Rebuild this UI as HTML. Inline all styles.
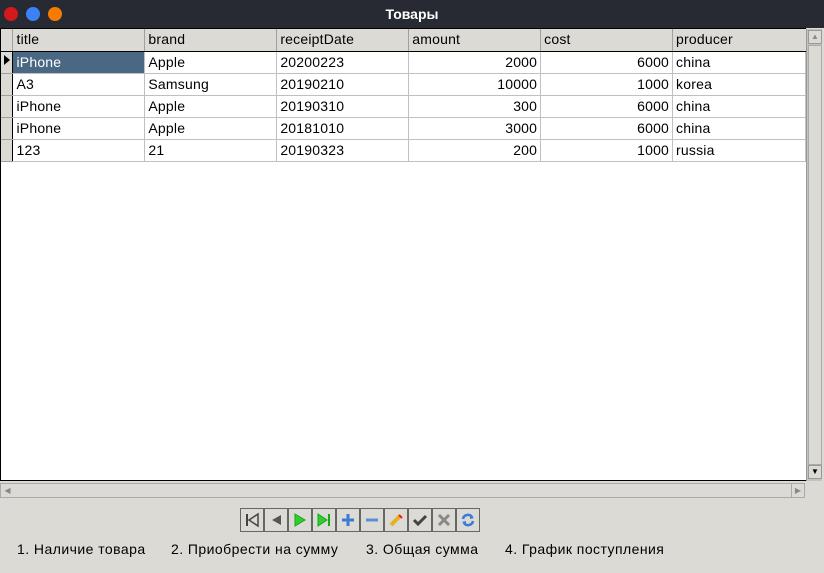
<!DOCTYPE html>
<html><head><meta charset="utf-8"><style>
*{box-sizing:border-box;margin:0;padding:0}
body{width:824px;height:573px;background:#dcdad5;font-family:"Liberation Sans","DejaVu Sans",sans-serif;font-size:14px;color:#000;position:relative;overflow:hidden}
.tb{position:absolute;left:0;top:0;width:824px;height:28px;background:#272a33;color:#fff;font-weight:bold;font-size:14px;text-align:center;line-height:28px}
.dot{position:absolute;top:7px;width:14px;height:14px;border-radius:50%}
.grid{position:absolute;left:0;top:28px;width:806px;height:453px;background:#fff;border:1px solid #000;border-right:none}
table{border-collapse:collapse;position:absolute;left:0;top:0;table-layout:fixed}
td,th{height:22px;padding:0 3px;border-right:1px solid #c0c0c0;border-bottom:1px solid #c0c0c0;font-weight:normal;text-align:left;white-space:nowrap;overflow:hidden;line-height:21px;letter-spacing:0.2px}
th{background:#dcdad5;border-right:1px solid #a0a0a0;border-bottom:1px solid #000}
td.rh{background:#dcdad5;border-right:1px solid #000;border-bottom:1px solid #a0a0a0;padding:0}
.r{text-align:right}
.sel{background:#4a6884;color:#fff}
.vs{position:absolute;left:806px;top:29px;width:16px;height:452px;background:#c4c2bd;border-left:1px solid #999}
.hs{position:absolute;left:0;top:483px;width:805px;height:15px;background:#dcdad5;border:1px solid #aaa}
.tbar{position:absolute;left:240px;top:508px;display:flex}
.tbar div{width:24px;height:24px;border:1px solid #666;background:#dcdad5;display:flex;align-items:center;justify-content:center}
.lbl{position:absolute;top:541px;font-size:14px;letter-spacing:0.45px}
</style></head><body>
<div class="tb">Товары
<div class="dot" style="left:4px;background:#d4191b"></div>
<div class="dot" style="left:26px;background:#3b82f6"></div>
<div class="dot" style="left:48px;background:#f57c00"></div>
</div>
<div class="grid">
<table>
<tr><th style="width:12px;padding:0"></th><th style="width:132px">title</th><th style="width:132px">brand</th><th style="width:132px">receiptDate</th><th style="width:132px">amount</th><th style="width:132px">cost</th><th style="width:133px;border-right:none">producer</th></tr>
<tr><td class="rh"><svg width="11" height="14"><path d="M3 2 L9 7 L3 12Z" fill="#000"/></svg></td><td class="sel">iPhone</td><td>Apple</td><td>20200223</td><td class="r">2000</td><td class="r">6000</td><td>china</td></tr>
<tr><td class="rh"></td><td>A3</td><td>Samsung</td><td>20190210</td><td class="r">10000</td><td class="r">1000</td><td>korea</td></tr>
<tr><td class="rh"></td><td>iPhone</td><td>Apple</td><td>20190310</td><td class="r">300</td><td class="r">6000</td><td>china</td></tr>
<tr><td class="rh"></td><td>iPhone</td><td>Apple</td><td>20181010</td><td class="r">3000</td><td class="r">6000</td><td>china</td></tr>
<tr><td class="rh"></td><td>123</td><td>21</td><td>20190323</td><td class="r">200</td><td class="r">1000</td><td>russia</td></tr>
</table>
</div>
<div class="vs">
<div style="position:absolute;left:1px;top:1px;width:14px;height:14px;background:#dcdad5;border:1px solid #999;font-size:8px;text-align:center;color:#888;line-height:12px">▲</div>
<div style="position:absolute;left:1px;top:16px;width:14px;height:420px;background:#dcdad5;border:1px solid #aaa"></div>
<div style="position:absolute;left:1px;top:436px;width:14px;height:14px;background:#dcdad5;border:1px solid #999;font-size:8px;text-align:center;line-height:12px">▼</div>
</div>
<div class="hs">
<div style="position:absolute;left:0;top:0;width:13px;height:13px;font-size:8px;color:#888;line-height:13px;text-align:center">◀</div>
<div style="position:absolute;right:0;top:0;width:13px;height:13px;font-size:8px;color:#888;line-height:13px;text-align:center;border-left:1px solid #aaa">▶</div>
</div>
<div class="tbar">
<div><svg width="16" height="16"><rect x="2" y="2" width="2" height="12" fill="#444"/><path d="M14 2 L5 8 L14 14Z" fill="none" stroke="#444" stroke-width="1.5"/></svg></div>
<div><svg width="16" height="16"><path d="M13 3 L4 8 L13 13Z" fill="#555"/></svg></div>
<div><svg width="16" height="16"><path d="M3 2 L13 8 L3 14Z" fill="#3c3" stroke="#1a1" /></svg></div>
<div><svg width="16" height="16"><path d="M2 2 L11 8 L2 14Z" fill="#3c3" stroke="#1a1"/><rect x="12" y="2" width="2" height="12" fill="#1a1"/></svg></div>
<div><svg width="16" height="16"><path d="M8 2V14M2 8H14" stroke="#3a7bd5" stroke-width="3"/></svg></div>
<div><svg width="16" height="16"><path d="M2 8H14" stroke="#5b8fd5" stroke-width="3"/></svg></div>
<div><svg width="16" height="16"><path d="M3 13 L12 4" stroke="#e8b020" stroke-width="4"/><path d="M11 3 L14 6" stroke="#d22" stroke-width="2"/></svg></div>
<div><svg width="16" height="16"><path d="M2 8 L6 12 L14 4" fill="none" stroke="#444" stroke-width="3"/></svg></div>
<div><svg width="16" height="16"><path d="M3 3 L13 13M13 3 L3 13" stroke="#888" stroke-width="3"/></svg></div>
<div><svg width="16" height="16"><path d="M3 7 A5 5 0 0 1 12 5M13 9 A5 5 0 0 1 4 11" fill="none" stroke="#3a7bd5" stroke-width="2.5"/><path d="M10 2 L14 6 L10 7Z M6 9 L2 10 L6 14Z" fill="#3a7bd5"/></svg></div>
</div>
<div class="lbl" style="left:17px">1. Наличие товара</div>
<div class="lbl" style="left:171px">2. Приобрести на сумму</div>
<div class="lbl" style="left:366px">3. Общая сумма</div>
<div class="lbl" style="left:505px">4. График поступления</div>
</body></html>
